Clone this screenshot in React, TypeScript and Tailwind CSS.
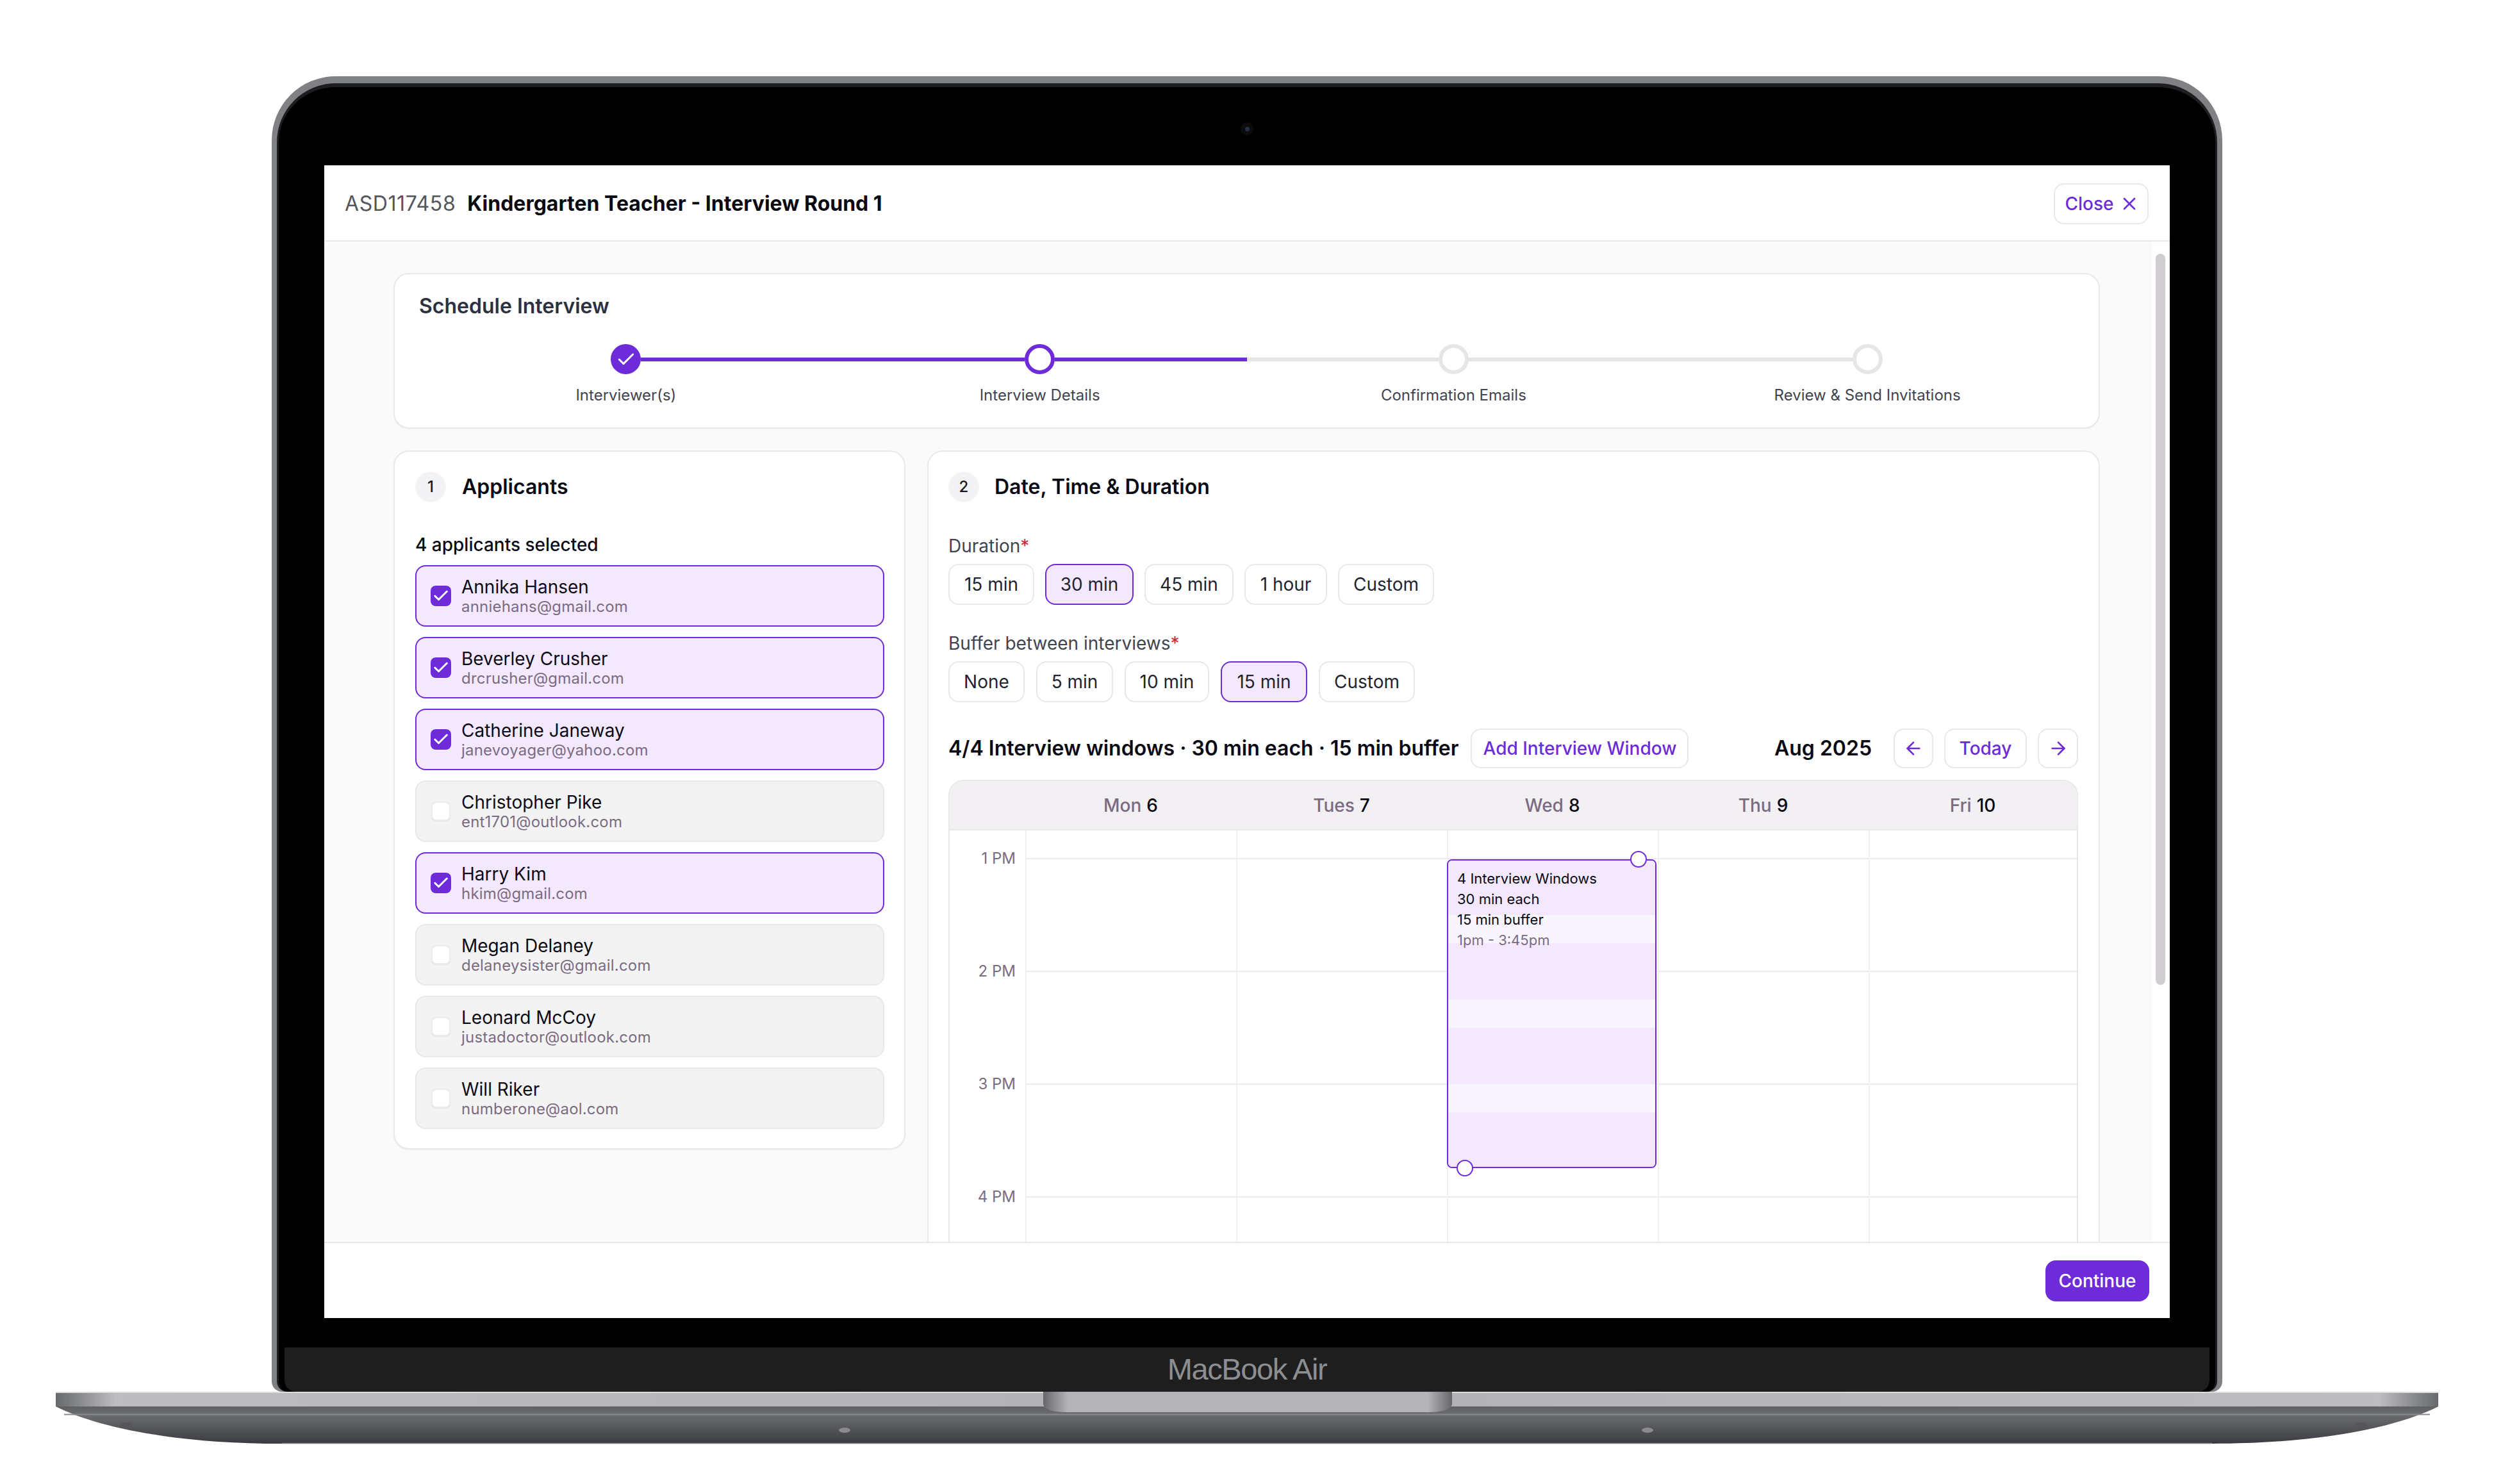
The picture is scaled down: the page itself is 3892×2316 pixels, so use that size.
import { ArrowLeft, ArrowRight, Check, X } from "lucide-react";

const applicants = [
  { name: "Annika Hansen", email: "anniehans@gmail.com", selected: true },
  { name: "Beverley Crusher", email: "drcrusher@gmail.com", selected: true },
  { name: "Catherine Janeway", email: "janevoyager@yahoo.com", selected: true },
  { name: "Christopher Pike", email: "ent1701@outlook.com", selected: false },
  { name: "Harry Kim", email: "hkim@gmail.com", selected: true },
  { name: "Megan Delaney", email: "delaneysister@gmail.com", selected: false },
  { name: "Leonard McCoy", email: "justadoctor@outlook.com", selected: false },
  { name: "Will Riker", email: "numberone@aol.com", selected: false },
];

const days = [
  { label: "Mon", date: "6" },
  { label: "Tues", date: "7" },
  { label: "Wed", date: "8" },
  { label: "Thu", date: "9" },
  { label: "Fri", date: "10" },
];

const hours = ["1 PM", "2 PM", "3 PM", "4 PM"];

const steps = [
  { label: "Interviewer(s)", state: "done", left: "bg-transparent", right: "bg-[#6d2bd9]" },
  { label: "Interview Details", state: "current", left: "bg-[#6d2bd9]", right: "bg-[#6d2bd9]" },
  { label: "Confirmation Emails", state: "todo", left: "bg-[#e6e5e8]", right: "bg-[#e6e5e8]" },
  { label: "Review & Send Invitations", state: "todo", left: "bg-[#e6e5e8]", right: "bg-transparent" },
];

const stripes = [
  { h: "h-[85px]", bg: "bg-[#f3e8fe]" },
  { h: "h-[44px]", bg: "bg-[#f8f5fe]" },
  { h: "h-[88px]", bg: "bg-[#f3e8fe]" },
  { h: "h-[44px]", bg: "bg-[#f8f5fe]" },
  { h: "h-[88px]", bg: "bg-[#f3e8fe]" },
  { h: "h-[44px]", bg: "bg-[#f8f5fe]" },
  { h: "flex-1", bg: "bg-[#f3e8fe]" },
];

function Option({ label, active, width }: { label: string; active?: boolean; width: string }) {
  return (
    <div
      className={`flex h-[64px] items-center justify-center rounded-[16px] border-2 text-[28px] text-[#1f2430] ${width} ${
        active ? "border-[#6d2bd9] bg-[#f3e8fe]" : "border-[#e8e8e8] bg-white"
      }`}
    >
      {label}
    </div>
  );
}

function NumberBadge({ n }: { n: number }) {
  return (
    <div className="flex h-[48px] w-[48px] items-center justify-center rounded-full bg-[#f3f2f4] text-[24px] font-medium text-[#1a1a24]">
      {n}
    </div>
  );
}

function Laptop({ children }: { children: React.ReactNode }) {
  return (
    <div className="flex h-[2316px] w-[3892px] flex-col items-center bg-white pt-[119px] font-['Inter',sans-serif]">
      <div className="w-[3044px] rounded-t-[100px] rounded-b-[16px] bg-[#808185] px-[8px] pt-[11px]">
        <div className="flex h-[2042px] flex-col rounded-t-[92px] rounded-b-[16px] border-x-[3px] border-t-[6px] border-[#1d1e21] bg-black">
          <div className="flex h-[122px] items-center justify-center pt-[8px]">
            <div className="flex h-[20px] w-[20px] items-center justify-center rounded-full bg-[#0c0c0e]">
              <div className="h-[7px] w-[7px] rounded-full bg-[#27304a]" />
            </div>
          </div>
          <div className="mx-auto flex h-[1799px] w-[2880px] flex-col bg-white">{children}</div>
          <div className="h-[46px]" />
          <div className="mx-[9px] flex h-[69px] items-center justify-center rounded-b-[18px] bg-[#1e1e1e] font-['Liberation_Sans',sans-serif] text-[47px] tracking-[-1.4px] text-[#8d8e92]">
            MacBook Air
          </div>
        </div>
      </div>
      <svg viewBox="0 0 3892 144" className="block h-[144px] w-[3892px]">
        <defs>
          <linearGradient id="body" x1="0" y1="0" x2="0" y2="1">
            <stop offset="0" stopColor="#5f6064" />
            <stop offset="0.22" stopColor="#6c6d71" />
            <stop offset="1" stopColor="#3a3b40" />
          </linearGradient>
          <linearGradient id="band" x1="0" y1="0" x2="1" y2="0">
            <stop offset="0" stopColor="#68696d" />
            <stop offset="0.012" stopColor="#8f9094" />
            <stop offset="0.025" stopColor="#bdbdc1" />
            <stop offset="0.5" stopColor="#b1b1b5" />
            <stop offset="0.975" stopColor="#bdbdc1" />
            <stop offset="0.988" stopColor="#8f9094" />
            <stop offset="1" stopColor="#68696d" />
          </linearGradient>
          <linearGradient id="notch" x1="0" y1="0" x2="1" y2="0">
            <stop offset="0" stopColor="#66676b" />
            <stop offset="0.06" stopColor="#b4b4b8" />
            <stop offset="0.94" stopColor="#b4b4b8" />
            <stop offset="1" stopColor="#66676b" />
          </linearGradient>
        </defs>
        <path d="M87 23 C 150 55, 270 81, 440 81 H3452 C 3622 81, 3742 55, 3805 23 Z" fill="url(#body)" />
        <path d="M440 80.5 H3452" stroke="#77787c" strokeWidth="1.5" />
        <rect x="100" y="34.5" width="3692" height="2" fill="#88898d" />
        <rect x="87" y="0" width="3718" height="23" fill="url(#band)" />
        <rect x="87" y="0" width="3718" height="2" fill="#dcdcdf" />
        <path d="M1628 0 H2266 V20 Q2262 32 2230 32 H1664 Q1632 32 1628 20 Z" fill="url(#notch)" />
        <ellipse cx="1318" cy="60" rx="9" ry="4" fill="#8a8b8f" />
        <ellipse cx="2571" cy="60" rx="9" ry="4" fill="#8a8b8f" />
        <ellipse cx="198" cy="52" rx="9" ry="4" fill="#55565a" />
        <ellipse cx="3685" cy="52" rx="9" ry="4" fill="#55565a" />
      </svg>
    </div>
  );
}

export default function App() {
  return (
    <Laptop>
      <header className="flex h-[119px] shrink-0 items-center justify-between border-b-2 border-[#e8e8e8] pl-[32px] pr-[33px] pt-[2px]">
        <div className="flex items-center gap-[18px] text-[32px]">
          <span className="tracking-[0.6px] text-[#55555c]">ASD117458</span>
          <span className="font-bold text-[#0a0a12]">Kindergarten Teacher - Interview Round 1</span>
        </div>
        <div className="flex h-[64px] w-[148px] items-center justify-center gap-[8px] rounded-[16px] border-2 border-[#e8e8e8] pl-[3px] text-[28px] font-medium text-[#6d2bd9]">
          Close
          <X size={32} strokeWidth={2} />
        </div>
      </header>

      <div className="flex min-h-0 flex-1">
        <main className="min-h-0 flex-1 overflow-hidden bg-[#fafafa] pl-[108px] pr-[82px] pt-[49px]">
          <section className="h-[243px] rounded-[24px] border-2 border-[#e9e9e9] bg-white px-[38px] pt-[31px] shadow-[0_1px_2px_rgba(0,0,0,0.04)]">
            <h2 className="text-[32px] font-semibold leading-[38px] text-[#2b3140]">Schedule Interview</h2>
            <div className="mt-[40px] grid grid-cols-4">
              {steps.map((s) => (
                <div key={s.label} className="flex flex-col items-center">
                  <div className="flex h-[47px] w-full items-center">
                    <div className={`h-[6px] flex-1 ${s.left}`} />
                    {s.state === "done" && (
                      <div className="flex h-[47px] w-[47px] items-center justify-center rounded-full bg-[#6d2bd9] text-white">
                        <Check size={32} strokeWidth={2.25} />
                      </div>
                    )}
                    {s.state === "current" && (
                      <div className="h-[47px] w-[47px] rounded-full border-[6px] border-[#6d2bd9] bg-white" />
                    )}
                    {s.state === "todo" && (
                      <div className="h-[47px] w-[47px] rounded-full border-[6px] border-[#e6e5e8] bg-white" />
                    )}
                    <div className={`h-[6px] flex-1 ${s.right}`} />
                  </div>
                  <div className="mt-[18px] text-[24px] leading-[30px] text-[#3f4450]">{s.label}</div>
                </div>
              ))}
            </div>
          </section>

          <div className="mt-[34px] flex items-start gap-[34px]">
            <section className="w-[799px] shrink-0 rounded-[24px] border-2 border-[#e9e9e9] bg-white pb-[30px] pl-[32px] pr-[31px] pt-[31px] shadow-[0_1px_2px_rgba(0,0,0,0.04)]">
              <div className="flex items-center gap-[25px]">
                <NumberBadge n={1} />
                <h3 className="text-[32px] font-semibold text-[#0a0a14]">Applicants</h3>
              </div>
              <div className="mt-[48px] text-[28px] font-medium leading-[36px] text-[#0a0a14]">4 applicants selected</div>
              <div className="mt-[14px] flex flex-col gap-[16px]">
                {applicants.map((a) => (
                  <div
                    key={a.email}
                    className={`flex h-[96px] items-center gap-[16px] rounded-[16px] border-2 pl-[22px] ${
                      a.selected ? "border-[#6d2bd9] bg-[#f4e8fe]" : "border-[#e8e8e8] bg-[#f3f3f3]"
                    }`}
                  >
                    <div className="flex h-[32px] w-[32px] items-center justify-center">
                      {a.selected ? (
                        <div className="flex h-[32px] w-[32px] items-center justify-center rounded-[8px] bg-[#6d2bd9] text-white">
                          <Check size={28} strokeWidth={2.5} />
                        </div>
                      ) : (
                        <div className="h-[30px] w-[30px] rounded-[8px] border-2 border-[#ececec] bg-white shadow-[0_1px_2px_rgba(0,0,0,0.08)]" />
                      )}
                    </div>
                    <div>
                      <div className="text-[28px] leading-[32px] text-[#0a0a14]">{a.name}</div>
                      <div className="mt-[1px] text-[24px] leading-[28px] tracking-[0.2px] text-[#7b6b82]">{a.email}</div>
                    </div>
                  </div>
                ))}
              </div>
            </section>

            <section className="h-[1400px] flex-1 rounded-[24px] border-2 border-[#e9e9e9] bg-white pl-[31px] pr-[32px] pt-[31px]">
              <div className="flex items-center gap-[24px]">
                <NumberBadge n={2} />
                <h3 className="text-[32px] font-semibold text-[#0a0a14]">Date, Time &amp; Duration</h3>
              </div>

              <div className="mt-[50px] text-[28px] leading-[36px] text-[#3f4450]">
                Duration<span className="text-[#d0293a]">*</span>
              </div>
              <div className="mt-[10px] flex gap-[17px]">
                <Option label="15 min" width="w-[134px]" />
                <Option label="30 min" active width="w-[138px]" />
                <Option label="45 min" width="w-[139px]" />
                <Option label="1 hour" width="w-[129px]" />
                <Option label="Custom" width="w-[150px]" />
              </div>

              <div className="mt-[42px] text-[28px] leading-[36px] text-[#3f4450]">
                Buffer between interviews<span className="text-[#d0293a]">*</span>
              </div>
              <div className="mt-[10px] flex gap-[18px]">
                <Option label="None" width="w-[119px]" />
                <Option label="5 min" width="w-[120px]" />
                <Option label="10 min" width="w-[132px]" />
                <Option label="15 min" active width="w-[135px]" />
                <Option label="Custom" width="w-[150px]" />
              </div>

              <div className="mt-[41px] flex h-[62px] items-center">
                <h4 className="text-[32px] font-semibold text-[#0a0a14]">4/4 Interview windows · 30 min each · 15 min buffer</h4>
                <div className="ml-[19px] flex h-[62px] w-[340px] items-center justify-center rounded-[16px] border-2 border-[#e8e8e8] text-[28px] font-medium text-[#6d2bd9]">
                  Add Interview Window
                </div>
                <div className="ml-auto text-[32px] font-semibold text-[#0a0a14]">Aug 2025</div>
                <div className="ml-[34px] flex h-[62px] w-[62px] items-center justify-center rounded-[16px] border-2 border-[#e8e8e8] text-[#6d2bd9]">
                  <ArrowLeft size={32} strokeWidth={2} />
                </div>
                <div className="ml-[17px] flex h-[62px] w-[129px] items-center justify-center rounded-[16px] border-2 border-[#e8e8e8] text-[28px] font-medium text-[#6d2bd9]">
                  Today
                </div>
                <div className="ml-[17px] flex h-[62px] w-[63px] items-center justify-center rounded-[16px] border-2 border-[#e8e8e8] text-[#6d2bd9]">
                  <ArrowRight size={32} strokeWidth={2} />
                </div>
              </div>

              <div className="mt-[18px] overflow-hidden rounded-t-[24px] border-x-2 border-t-2 border-[#e8e8e8]">
                <div className="grid h-[77px] grid-cols-[118px_repeat(4,329px)_1fr] border-b-2 border-[#e8e8e8] bg-[#f2f0f3]">
                  <div />
                  {days.map((d) => (
                    <div key={d.label} className="flex items-center justify-center gap-[8px] text-[28px] font-medium text-[#7b6b82]">
                      {d.label}
                      <span className="text-[#0a0a14]">{d.date}</span>
                    </div>
                  ))}
                </div>
                <div className="grid grid-cols-[118px_repeat(4,329px)_1fr]">
                  <div className="pt-[44px]">
                    {hours.map((h) => (
                      <div key={h} className="h-[176px] pr-[15px] text-right text-[24px] leading-[24px] text-[#7b6b82]">
                        <div className="-translate-y-1/2">{h}</div>
                      </div>
                    ))}
                  </div>
                  {days.map((d) => (
                    <div key={d.label} className="relative border-l-2 border-[#f0f0f0] pt-[43px]">
                      {hours.map((h) => (
                        <div key={h} className="h-[176px] border-t-2 border-[#ebebeb]" />
                      ))}
                      {d.label === "Wed" && (
                        <div className="absolute left-[-2px] top-[45px] flex h-[482px] w-[327px] flex-col">
                          <div className="flex h-full flex-col overflow-hidden rounded-[8px] border-2 border-[#6d2bd9]">
                            {stripes.map((s, i) => (
                              <div key={i} className={`${s.h} ${s.bg}`} />
                            ))}
                          </div>
                          <div className="absolute left-[16px] top-[14px] text-[22px] leading-[32px] text-[#0a0a14]">
                            <div>4 Interview Windows</div>
                            <div>30 min each</div>
                            <div>15 min buffer</div>
                            <div className="text-[#7b6b82]">1pm - 3:45pm</div>
                          </div>
                          <div className="absolute right-[15px] top-[-13px] h-[26px] w-[26px] rounded-full border-2 border-[#6d2bd9] bg-white" />
                          <div className="absolute bottom-[-13px] left-[15px] h-[26px] w-[26px] rounded-full border-2 border-[#6d2bd9] bg-white" />
                        </div>
                      )}
                    </div>
                  ))}
                </div>
              </div>
            </section>
          </div>
        </main>
        <div className="w-[27px] shrink-0 bg-white pl-[5px] pt-[19px]">
          <div className="h-[1141px] w-[15px] rounded-full bg-[#d0ccd2]" />
        </div>
      </div>

      <footer className="flex h-[119px] shrink-0 items-center justify-end border-t-2 border-[#e8e8e8] pr-[32px]">
        <div className="flex h-[64px] w-[162px] items-center justify-center rounded-[16px] bg-[#6d2bd9] text-[28px] font-medium text-white">
          Continue
        </div>
      </footer>
    </Laptop>
  );
}
